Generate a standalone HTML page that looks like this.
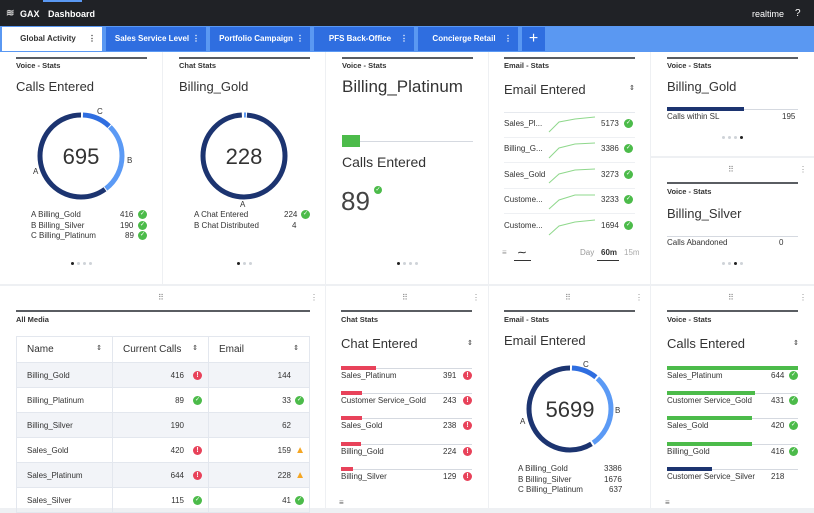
<!DOCTYPE html>
<html><head><meta charset="utf-8"><style>
*{box-sizing:border-box;margin:0;padding:0}
body{width:814px;height:508px;overflow:hidden;background:#eef0f3;font-family:"Liberation Sans",sans-serif;color:#333;position:relative}
.a{position:absolute}
.top{left:0;top:0;width:814px;height:26px;background:#202226;color:#fff;font-size:9px;font-weight:bold}
.tabs{left:0;top:26px;width:814px;height:26px;background:#5a98f2}
.tab{position:absolute;top:1px;height:24px;background:#2f6ee0;color:#fff;font-size:8px;font-weight:bold;line-height:24px;text-align:center;padding-right:8px}
.tab i{position:absolute;right:6px;top:0;font-style:normal}
.card{position:absolute;background:#fff}
.hl{position:absolute;height:2px;background:#5a5d62}
.lbl{position:absolute;font-size:7.5px;font-weight:bold;color:#333}
.t{position:absolute;font-size:13px;color:#333}
.s{position:absolute;font-size:8px;color:#333}
.ok{position:absolute;width:9px;height:9px;border-radius:50%;background:#4cbb4a;color:#fff;font-size:6px;line-height:9px;text-align:center}
.er{position:absolute;width:9px;height:9px;border-radius:50%;background:#e8425a;color:#fff;font-size:7px;font-weight:bold;line-height:9px;text-align:center}
.dots{position:absolute;font-size:0}
.dots b{display:inline-block;width:3px;height:3px;border-radius:50%;background:#cfd3d8;margin-right:3px}
.dots b.on{background:#222}
table{border-collapse:collapse;font-size:8px}
td{border:1px solid #e3e7ee;height:25px;padding:0 10px}
</style></head><body>
<div class="a top"><span class="a" style="left:6px;top:8px;font-size:10px;color:#ccc">≋</span><span class="a" style="left:20px;top:9px">GAX</span><span class="a" style="left:48px;top:9px">Dashboard</span><span class="a" style="left:43px;top:0;width:39px;height:2px;background:#5a98f2"></span><span class="a" style="left:752px;top:9px;font-weight:normal">realtime</span><span class="a" style="left:795px;top:8px;font-weight:normal;font-size:10px">?</span></div>
<div class="a tabs">
<div class="tab" style="left:2px;width:100px;background:#fff;color:#333">Global Activity<i style="color:#333">⋮</i></div>
<div class="tab" style="left:106px;width:100px">Sales Service Level<i>⋮</i></div>
<div class="tab" style="left:210px;width:100px">Portfolio Campaign<i>⋮</i></div>
<div class="tab" style="left:314px;width:100px">PFS Back-Office<i>⋮</i></div>
<div class="tab" style="left:418px;width:100px">Concierge Retail<i>⋮</i></div>
<div class="tab" style="left:522px;width:23px;font-size:16px;font-weight:normal;padding:0">+</div>
</div>

<!-- Row1 -->
<div class="card" style="left:0;top:52px;width:162px;height:232px">
<div class="hl" style="left:16px;top:5px;width:131px"></div><div class="lbl" style="left:16px;top:9px">Voice - Stats</div>
<div class="t" style="left:16px;top:27px">Calls Entered</div>
<svg class="a" style="left:31px;top:54px" width="100" height="100"><g transform="rotate(-90 50 50)" fill="none" stroke-width="5"><circle cx="50" cy="50" r="41" stroke="#1c3470" stroke-dasharray="155 103" stroke-dashoffset="-103"/><circle cx="50" cy="50" r="41" stroke="#5b9af5" stroke-dasharray="70 188" stroke-dashoffset="-32"/><circle cx="50" cy="50" r="41" stroke="#2f6ee0" stroke-dasharray="29 229" stroke-dashoffset="-2"/></g><text x="50" y="58" text-anchor="middle" font-size="22" fill="#333" font-family="Liberation Sans">695</text></svg>
<div class="s" style="left:97px;top:55px">C</div><div class="s" style="left:127px;top:104px">B</div><div class="s" style="left:33px;top:115px">A</div>
<div class="s" style="left:31px;top:158px">A Billing_Gold</div><div class="s" style="left:120px;top:158px">416</div><div class="ok" style="left:138px;top:158px">✓</div>
<div class="s" style="left:31px;top:169px">B Billing_Silver</div><div class="s" style="left:120px;top:169px">190</div><div class="ok" style="left:138px;top:169px">✓</div>
<div class="s" style="left:31px;top:179px">C Billing_Platinum</div><div class="s" style="left:125px;top:179px">89</div><div class="ok" style="left:138px;top:179px">✓</div>
<div class="dots" style="left:71px;top:210px"><b class="on"></b><b></b><b></b><b></b></div>
</div>

<div class="card" style="left:163px;top:52px;width:162px;height:232px">
<div class="hl" style="left:16px;top:5px;width:131px"></div><div class="lbl" style="left:16px;top:9px">Chat Stats</div>
<div class="t" style="left:16px;top:27px">Billing_Gold</div>
<svg class="a" style="left:31px;top:54px" width="100" height="100"><g transform="rotate(-90 50 50)" fill="none" stroke-width="5"><circle cx="50" cy="50" r="41" stroke="#1c3470" stroke-dasharray="252 6" stroke-dashoffset="-3"/><circle cx="50" cy="50" r="41" stroke="#5b9af5" stroke-dasharray="2 256" stroke-dashoffset="0"/></g><text x="50" y="58" text-anchor="middle" font-size="22" fill="#333" font-family="Liberation Sans">228</text></svg>
<div class="s" style="left:77px;top:148px">A</div>
<div class="s" style="left:31px;top:158px">A Chat Entered</div><div class="s" style="left:121px;top:158px">224</div><div class="ok" style="left:138px;top:158px">✓</div>
<div class="s" style="left:31px;top:169px">B Chat Distributed</div><div class="s" style="left:129px;top:169px">4</div>
<div class="dots" style="left:74px;top:210px"><b class="on"></b><b></b><b></b></div>
</div>

<div class="card" style="left:326px;top:52px;width:162px;height:232px">
<div class="hl" style="left:16px;top:5px;width:131px"></div><div class="lbl" style="left:16px;top:9px">Voice - Stats</div>
<div class="t" style="left:16px;top:25px;font-size:17px">Billing_Platinum</div>
<div class="a" style="left:16px;top:89px;width:131px;height:1px;background:#d5d9e0"></div>
<div class="a" style="left:16px;top:83px;width:18px;height:12px;background:#4cbb4a"></div>
<div class="t" style="left:16px;top:102px;font-size:14px">Calls Entered</div>
<div class="t" style="left:15px;top:134px;font-size:26px;font-weight:300;color:#444">89</div>
<div class="ok" style="left:48px;top:134px;width:8px;height:8px;line-height:8px">✓</div>
<div class="dots" style="left:71px;top:210px"><b class="on"></b><b></b><b></b><b></b></div>
</div>

<div class="card" style="left:489px;top:52px;width:161px;height:232px">
<div class="hl" style="left:15px;top:5px;width:131px"></div><div class="lbl" style="left:15px;top:9px">Email - Stats</div>
<div class="t" style="left:15px;top:30px">Email Entered</div><div class="s" style="left:140px;top:32px;font-size:7px">⇕</div>
<div class="a" style="left:15px;top:60px;width:131px;height:1px;background:#e6e9ee"></div>
<svg class="a" style="left:58px;top:62px" width="50" height="130" fill="none" stroke="#8fd88c" stroke-width="1"><path d="M2 18 L12 8 L28 5 L48 3"/><path d="M2 44 L12 34 L28 30 L48 29"/><path d="M2 69 L12 60 L28 56 L48 55"/><path d="M2 95 L12 86 L28 81 L48 81"/><path d="M2 121 L12 112 L28 108 L48 106"/></svg>
<div class="s" style="left:15px;top:67px">Sales_Pl...</div><div class="s" style="left:112px;top:67px">5173</div><div class="ok" style="left:135px;top:67px">✓</div>
<div class="a" style="left:15px;top:85px;width:131px;height:1px;background:#eef0f3"></div>
<div class="s" style="left:15px;top:92px">Billing_G...</div><div class="s" style="left:112px;top:92px">3386</div><div class="ok" style="left:135px;top:92px">✓</div>
<div class="a" style="left:15px;top:110px;width:131px;height:1px;background:#eef0f3"></div>
<div class="s" style="left:15px;top:118px">Sales_Gold</div><div class="s" style="left:112px;top:118px">3273</div><div class="ok" style="left:135px;top:118px">✓</div>
<div class="a" style="left:15px;top:136px;width:131px;height:1px;background:#eef0f3"></div>
<div class="s" style="left:15px;top:143px">Custome...</div><div class="s" style="left:112px;top:143px">3233</div><div class="ok" style="left:135px;top:143px">✓</div>
<div class="a" style="left:15px;top:161px;width:131px;height:1px;background:#eef0f3"></div>
<div class="s" style="left:15px;top:169px">Custome...</div><div class="s" style="left:112px;top:169px">1694</div><div class="ok" style="left:135px;top:169px">✓</div>
<div class="s" style="left:13px;top:196px;color:#999">≡</div><div class="s" style="left:29px;top:196px;font-weight:bold">⁓</div>
<div class="a" style="left:25px;top:208px;width:17px;height:1px;background:#333"></div>
<div class="s" style="left:91px;top:196px;color:#999">Day</div><div class="s" style="left:112px;top:196px;font-weight:bold">60m</div><div class="s" style="left:135px;top:196px;color:#aaa">15m</div>
<div class="a" style="left:108px;top:208px;width:22px;height:1px;background:#333"></div>
</div>

<div class="card" style="left:651px;top:52px;width:163px;height:104px">
<div class="hl" style="left:16px;top:5px;width:131px"></div><div class="lbl" style="left:16px;top:9px">Voice - Stats</div>
<div class="t" style="left:16px;top:27px">Billing_Gold</div>
<div class="a" style="left:16px;top:57px;width:131px;height:1px;background:#d5d9e0"></div>
<div class="a" style="left:16px;top:55px;width:77px;height:4px;background:#1c3470"></div>
<div class="s" style="left:16px;top:60px">Calls within SL</div><div class="s" style="left:131px;top:60px">195</div>
<div class="dots" style="left:71px;top:84px"><b></b><b></b><b></b><b class="on"></b></div>
</div>
<div class="card" style="left:651px;top:158px;width:163px;height:126px">
<div class="s" style="left:77px;top:7px;color:#888">⠿</div><div class="s" style="left:148px;top:7px;color:#888">⋮</div>
<div class="hl" style="left:16px;top:24px;width:131px"></div><div class="lbl" style="left:16px;top:29px">Voice - Stats</div>
<div class="t" style="left:16px;top:48px">Billing_Silver</div>
<div class="a" style="left:16px;top:78px;width:131px;height:1px;background:#d5d9e0"></div>
<div class="s" style="left:16px;top:80px">Calls Abandoned</div><div class="s" style="left:128px;top:80px">0</div>
<div class="dots" style="left:71px;top:104px"><b></b><b></b><b class="on"></b><b></b></div>
</div>

<!-- Row2 -->
<div class="card" style="left:0;top:286px;width:325px;height:222px">
<div class="s" style="left:158px;top:7px;color:#888">⠿</div><div class="s" style="left:310px;top:7px;color:#888">⋮</div>
<div class="hl" style="left:16px;top:24px;width:294px"></div><div class="lbl" style="left:16px;top:29px">All Media</div>
<table class="a" style="left:16px;top:50px;width:294px">
<tr style="height:26px;font-size:10px"><td style="width:96px">Name<span style="float:right;font-size:7px">⇕</span></td><td style="width:96px">Current Calls<span style="float:right;font-size:7px">⇕</span></td><td>Email<span style="float:right;font-size:7px">⇕</span></td></tr>
<tr style="background:#f2f4f8"><td>Billing_Gold</td><td style="text-align:right;padding-right:24px;position:relative">416<span class="er" style="right:6px;top:8px">!</span></td><td style="text-align:right;padding-right:18px">144</td></tr>
<tr><td>Billing_Platinum</td><td style="text-align:right;padding-right:24px;position:relative">89<span class="ok" style="right:6px;top:8px">✓</span></td><td style="text-align:right;padding-right:18px;position:relative">33<span class="ok" style="right:5px;top:8px">✓</span></td></tr>
<tr style="background:#f2f4f8"><td>Billing_Silver</td><td style="text-align:right;padding-right:24px">190</td><td style="text-align:right;padding-right:18px">62</td></tr>
<tr><td>Sales_Gold</td><td style="text-align:right;padding-right:24px;position:relative">420<span class="er" style="right:6px;top:8px">!</span></td><td style="text-align:right;padding-right:18px;position:relative">159<span style="position:absolute;right:4px;top:7px;color:#f5a623;font-size:10px">▲</span></td></tr>
<tr style="background:#f2f4f8"><td>Sales_Platinum</td><td style="text-align:right;padding-right:24px;position:relative">644<span class="er" style="right:6px;top:8px">!</span></td><td style="text-align:right;padding-right:18px;position:relative">228<span style="position:absolute;right:4px;top:7px;color:#f5a623;font-size:10px">▲</span></td></tr>
<tr><td>Sales_Silver</td><td style="text-align:right;padding-right:24px;position:relative">115<span class="ok" style="right:6px;top:8px">✓</span></td><td style="text-align:right;padding-right:18px;position:relative">41<span class="ok" style="right:5px;top:8px">✓</span></td></tr>
</table>
</div>

<div class="card" style="left:326px;top:286px;width:162px;height:222px">
<div class="s" style="left:76px;top:7px;color:#888">⠿</div><div class="s" style="left:146px;top:7px;color:#888">⋮</div>
<div class="hl" style="left:15px;top:24px;width:131px"></div><div class="lbl" style="left:15px;top:29px">Chat Stats</div>
<div class="t" style="left:15px;top:50px">Chat Entered</div><div class="s" style="left:141px;top:53px;font-size:7px">⇕</div>
<div class="a" style="left:15px;top:82px;width:131px;height:1px;background:#d5d9e0"></div><div class="a" style="left:15px;top:80px;width:35px;height:4px;background:#e8425a"></div>
<div class="s" style="left:15px;top:85px">Sales_Platinum</div><div class="s" style="left:117px;top:85px">391</div><div class="er" style="left:137px;top:85px">!</div>
<div class="a" style="left:15px;top:107px;width:131px;height:1px;background:#d5d9e0"></div><div class="a" style="left:15px;top:105px;width:21px;height:4px;background:#e8425a"></div>
<div class="s" style="left:15px;top:110px">Customer Service_Gold</div><div class="s" style="left:117px;top:110px">243</div><div class="er" style="left:137px;top:110px">!</div>
<div class="a" style="left:15px;top:132px;width:131px;height:1px;background:#d5d9e0"></div><div class="a" style="left:15px;top:130px;width:21px;height:4px;background:#e8425a"></div>
<div class="s" style="left:15px;top:135px">Sales_Gold</div><div class="s" style="left:117px;top:135px">238</div><div class="er" style="left:137px;top:135px">!</div>
<div class="a" style="left:15px;top:158px;width:131px;height:1px;background:#d5d9e0"></div><div class="a" style="left:15px;top:156px;width:20px;height:4px;background:#e8425a"></div>
<div class="s" style="left:15px;top:161px">Billing_Gold</div><div class="s" style="left:117px;top:161px">224</div><div class="er" style="left:137px;top:161px">!</div>
<div class="a" style="left:15px;top:183px;width:131px;height:1px;background:#d5d9e0"></div><div class="a" style="left:15px;top:181px;width:12px;height:4px;background:#e8425a"></div>
<div class="s" style="left:15px;top:186px">Billing_Silver</div><div class="s" style="left:117px;top:186px">129</div><div class="er" style="left:137px;top:186px">!</div>
<div class="s" style="left:13px;top:212px;color:#666">≡</div>
</div>

<div class="card" style="left:489px;top:286px;width:161px;height:222px">
<div class="s" style="left:76px;top:7px;color:#888">⠿</div><div class="s" style="left:146px;top:7px;color:#888">⋮</div>
<div class="hl" style="left:15px;top:24px;width:131px"></div><div class="lbl" style="left:15px;top:29px">Email - Stats</div>
<div class="t" style="left:15px;top:47px">Email Entered</div>
<svg class="a" style="left:36px;top:78px" width="90" height="90"><g transform="rotate(-90 45 45)" fill="none" stroke-width="5"><circle cx="45" cy="45" r="41" stroke="#1c3470" stroke-dasharray="152 106" stroke-dashoffset="-106"/><circle cx="45" cy="45" r="41" stroke="#5b9af5" stroke-dasharray="74 184" stroke-dashoffset="-30"/><circle cx="45" cy="45" r="41" stroke="#2f6ee0" stroke-dasharray="26 232" stroke-dashoffset="-2"/></g><text x="45" y="53" text-anchor="middle" font-size="22" fill="#333" font-family="Liberation Sans">5699</text></svg>
<div class="s" style="left:94px;top:74px">C</div><div class="s" style="left:126px;top:120px">B</div><div class="s" style="left:31px;top:131px">A</div>
<div class="s" style="left:29px;top:178px">A Billing_Gold</div><div class="s" style="left:115px;top:178px">3386</div>
<div class="s" style="left:29px;top:189px">B Billing_Silver</div><div class="s" style="left:115px;top:189px">1676</div>
<div class="s" style="left:29px;top:199px">C Billing_Platinum</div><div class="s" style="left:120px;top:199px">637</div>
</div>

<div class="card" style="left:651px;top:286px;width:163px;height:222px">
<div class="s" style="left:77px;top:7px;color:#888">⠿</div><div class="s" style="left:148px;top:7px;color:#888">⋮</div>
<div class="hl" style="left:16px;top:24px;width:131px"></div><div class="lbl" style="left:16px;top:29px">Voice - Stats</div>
<div class="t" style="left:16px;top:50px">Calls Entered</div><div class="s" style="left:142px;top:53px;font-size:7px">⇕</div>
<div class="a" style="left:16px;top:80px;width:131px;height:4px;background:#4cbb4a"></div>
<div class="s" style="left:16px;top:85px">Sales_Platinum</div><div class="s" style="left:120px;top:85px">644</div><div class="ok" style="left:138px;top:85px">✓</div>
<div class="a" style="left:16px;top:107px;width:131px;height:1px;background:#d5d9e0"></div><div class="a" style="left:16px;top:105px;width:88px;height:4px;background:#4cbb4a"></div>
<div class="s" style="left:16px;top:110px">Customer Service_Gold</div><div class="s" style="left:120px;top:110px">431</div><div class="ok" style="left:138px;top:110px">✓</div>
<div class="a" style="left:16px;top:132px;width:131px;height:1px;background:#d5d9e0"></div><div class="a" style="left:16px;top:130px;width:85px;height:4px;background:#4cbb4a"></div>
<div class="s" style="left:16px;top:135px">Sales_Gold</div><div class="s" style="left:120px;top:135px">420</div><div class="ok" style="left:138px;top:135px">✓</div>
<div class="a" style="left:16px;top:158px;width:131px;height:1px;background:#d5d9e0"></div><div class="a" style="left:16px;top:156px;width:85px;height:4px;background:#4cbb4a"></div>
<div class="s" style="left:16px;top:161px">Billing_Gold</div><div class="s" style="left:120px;top:161px">416</div><div class="ok" style="left:138px;top:161px">✓</div>
<div class="a" style="left:16px;top:183px;width:131px;height:1px;background:#d5d9e0"></div><div class="a" style="left:16px;top:181px;width:45px;height:4px;background:#1c3470"></div>
<div class="s" style="left:16px;top:186px">Customer Service_Silver</div><div class="s" style="left:120px;top:186px">218</div>
<div class="s" style="left:14px;top:212px;color:#666">≡</div>
</div>
</body></html>
